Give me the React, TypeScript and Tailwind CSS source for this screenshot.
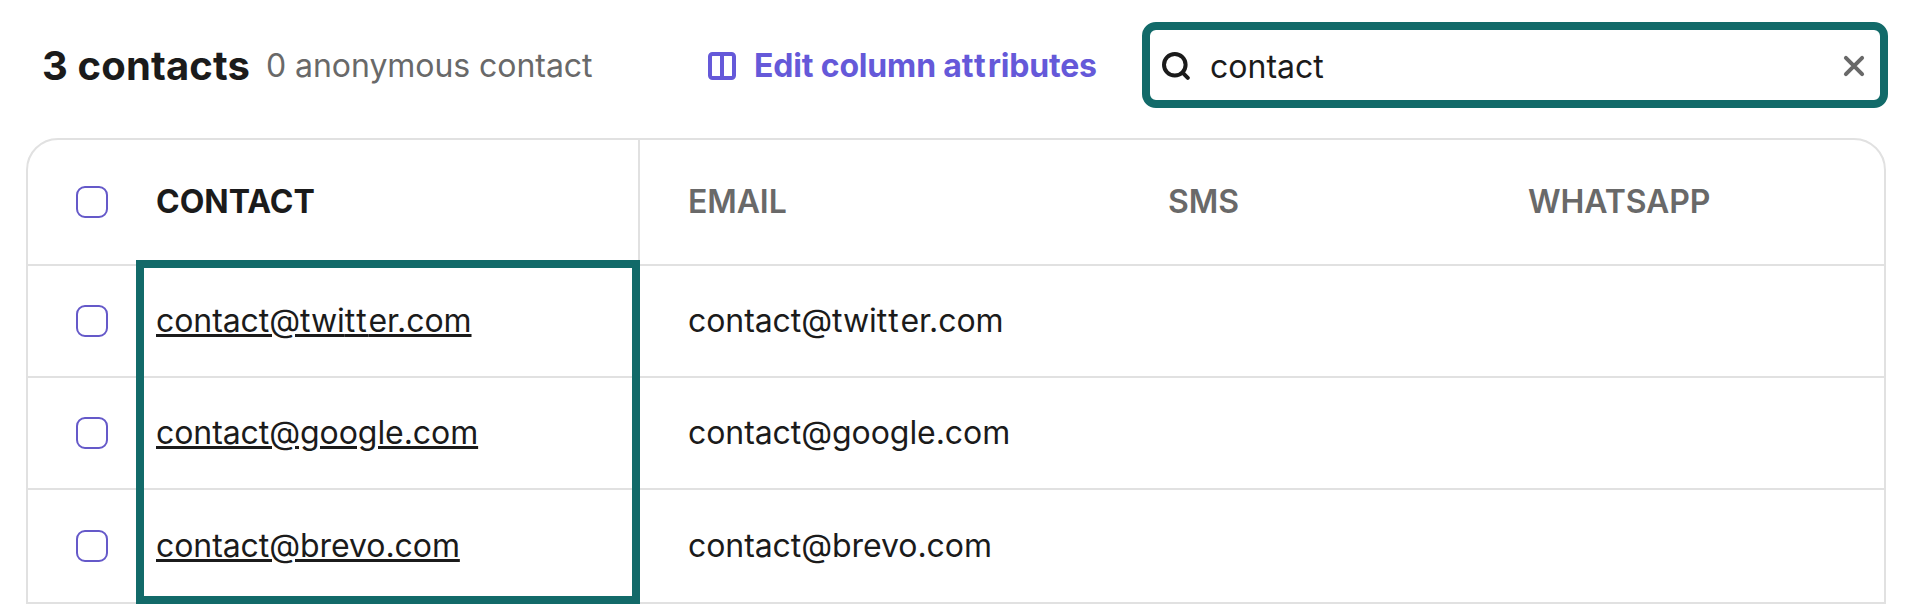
import React from 'react'

interface Contact {
  id: number
  email: string
}

const contacts: Contact[] = [
  { id: 1, email: 'contact@twitter.com' },
  { id: 2, email: 'contact@google.com' },
  { id: 3, email: 'contact@brevo.com' },
]

const Label: React.FC<{ text: string }> = ({ text }) => (
  <>
    {text.split('tt').map((part, i) => (
      <React.Fragment key={i}>
        {i > 0 && <span className="tracking-[1.8px]">tt</span>}
        {part}
      </React.Fragment>
    ))}
  </>
)

const Checkbox: React.FC = () => (
  <input
    type="checkbox"
    className="ml-12 block size-8 shrink-0 appearance-none rounded-[9px] border-2 border-[#6559c9] bg-white"
  />
)

const ColumnsIcon: React.FC = () => (
  <svg className="size-7 shrink-0" viewBox="0 0 28 28" fill="none" stroke="currentColor" strokeWidth="4">
    <rect x="2" y="2" width="24" height="24" rx="2.5" />
    <path d="M14 2v24" />
  </svg>
)

const SearchIcon: React.FC = () => (
  <svg
    className="size-7 shrink-0"
    viewBox="0 0 28 28"
    fill="none"
    stroke="currentColor"
    strokeWidth="4"
    strokeLinecap="round"
  >
    <circle cx="12.8" cy="12.8" r="10.8" />
    <path d="M20.6 20.6l5.2 5.2" />
  </svg>
)

const ClearIcon: React.FC = () => (
  <svg
    className="size-[22px]"
    viewBox="0 0 22 22"
    fill="none"
    stroke="currentColor"
    strokeWidth="4"
    strokeLinecap="round"
  >
    <path d="M2.9 2.9l16.2 16.2M19.1 2.9L2.9 19.1" />
  </svg>
)

const Toolbar: React.FC = () => (
  <div className="flex h-[86px] items-center">
    <h1 className="ml-[42px] w-[224px] shrink-0 whitespace-nowrap pt-0.5 text-[40px] font-bold tracking-[0.14px]">
      3 contacts
    </h1>
    <span className="w-[442px] shrink-0 whitespace-nowrap pt-0.5 text-[32px] tracking-[-0.05px] text-[#696969]">
      0 anonymous contact
    </span>
    <button className="flex w-[434px] shrink-0 items-center gap-[18px] whitespace-nowrap pt-0.5 text-[32px] font-bold tracking-[-0.17px] text-[#6559d9]">
      <ColumnsIcon />
      <span>
        <Label text="Edit column attributes" />
      </span>
    </button>
    <div className="flex h-[86px] w-[746px] shrink-0 items-center rounded-[14px] border-8 border-[#126a69] pt-0.5 pr-[15px] pl-3">
      <SearchIcon />
      <input
        type="text"
        defaultValue="contact"
        className="ml-5 min-w-0 flex-1 bg-transparent pt-0.5 text-[32px] outline-none"
      />
      <button aria-label="Clear" className="text-[#696969]">
        <ClearIcon />
      </button>
    </div>
  </div>
)

const ContactsTable: React.FC = () => (
  <div className="relative mt-[30px] ml-[26px] w-[1860px] rounded-t-[32px] border-2 border-[#e1e1e1]">
    <div className="flex h-[126px] items-center border-b-2 border-[#e1e1e1] font-semibold tracking-[-0.1px] text-[#696969]">
      <div className="flex h-full w-[612px] shrink-0 items-center border-r-2 border-[#e1e1e1] text-[#1b1b1b]">
        <Checkbox />
        <span className="ml-12 font-bold tracking-normal">CONTACT</span>
      </div>
      <span className="ml-12 w-[480px]">EMAIL</span>
      <span className="w-[360px]">SMS</span>
      <span>WHATSAPP</span>
    </div>
    {contacts.map((contact) => (
      <div
        key={contact.id}
        className="flex h-28 items-center border-b-2 border-[#e1e1e1] tracking-[-0.07px] last-of-type:border-b-0"
      >
        <div className="flex w-[612px] shrink-0 items-center">
          <Checkbox />
          <a href="#" className="ml-12 underline">
            <Label text={contact.email} />
          </a>
        </div>
        <span className="ml-12">
          <Label text={contact.email} />
        </span>
      </div>
    ))}
    {/* highlight over the contact column */}
    <span className="pointer-events-none absolute -bottom-0.5 left-[108px] h-[344px] w-[504px] border-8 border-[#126a69]" />
  </div>
)

const App: React.FC = () => {
  return (
    <div className="h-[604px] w-[1908px] overflow-hidden bg-white pt-[22px] font-['Inter',sans-serif] text-[32px] text-[#1b1b1b]">
      <Toolbar />
      <ContactsTable />
    </div>
  )
}

export default App
